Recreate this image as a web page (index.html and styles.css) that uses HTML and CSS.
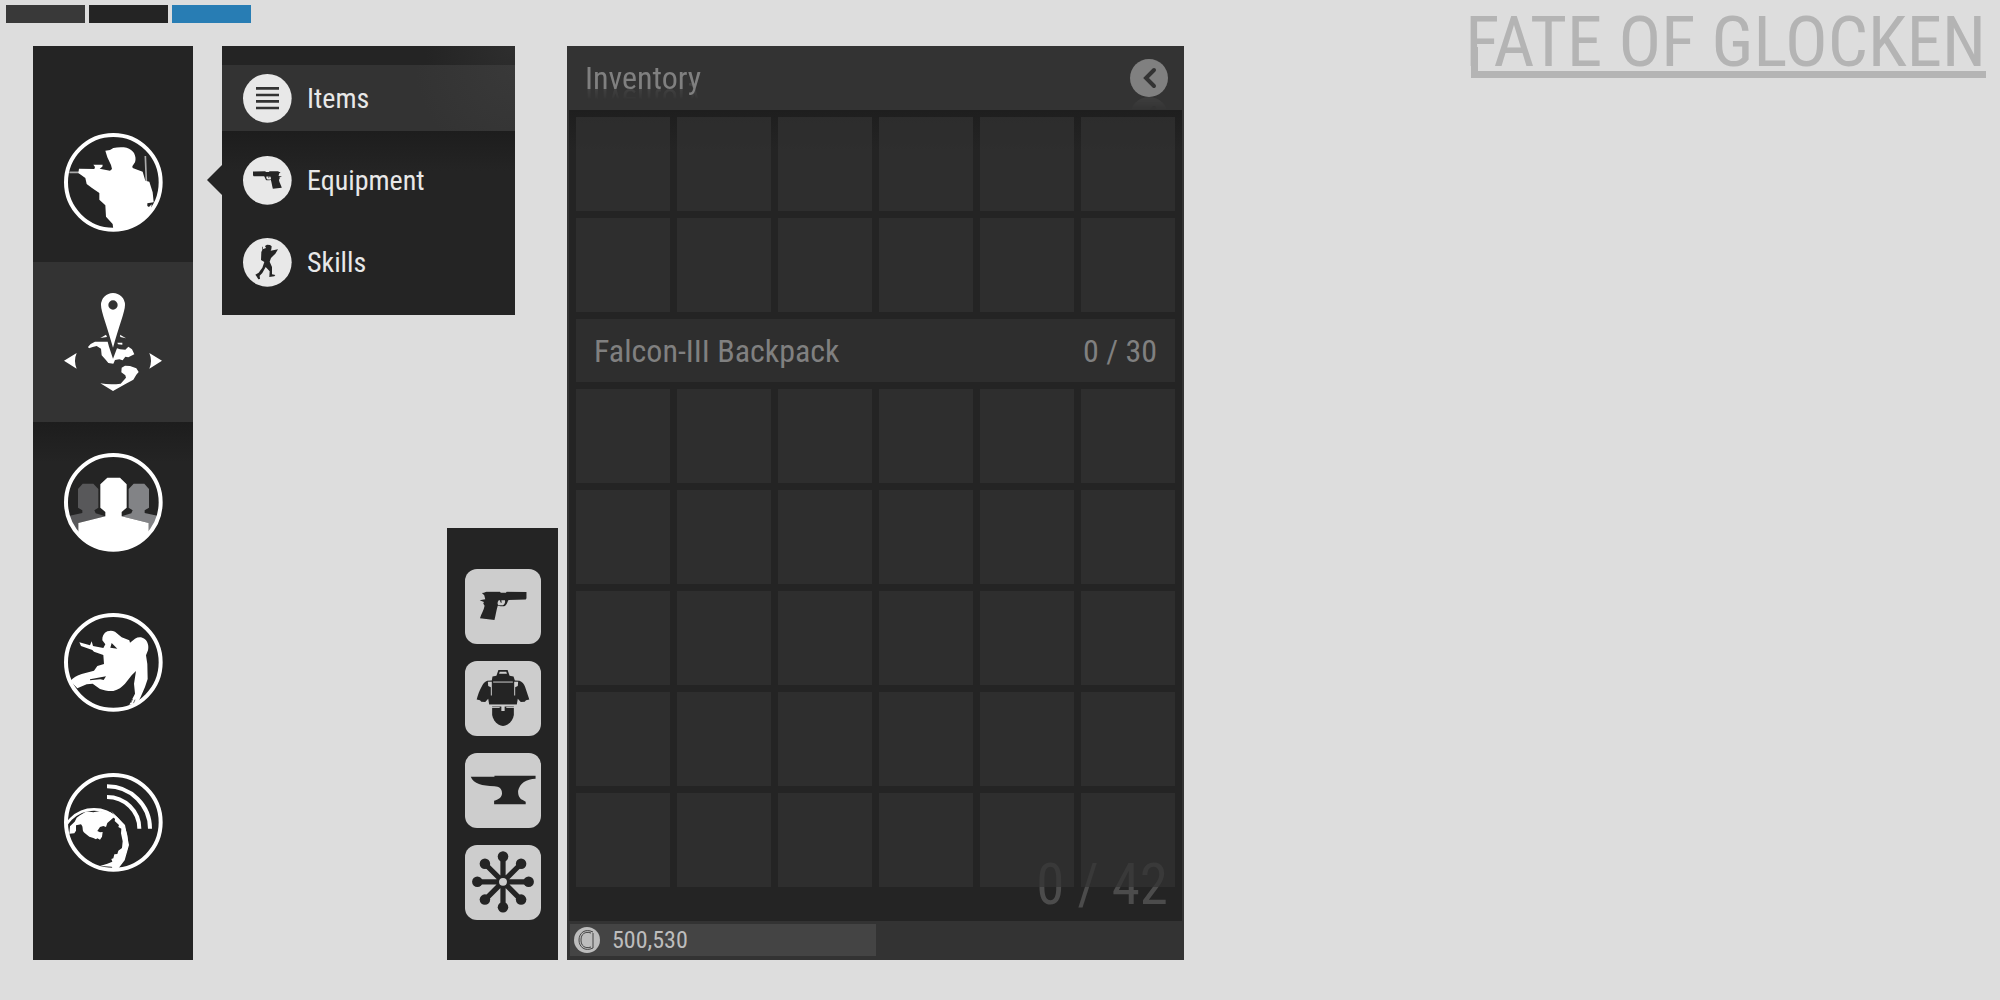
FILE: index.html
```html
<!DOCTYPE html>
<html lang="en">
<head>
  <meta charset="UTF-8">
  <meta name="viewport" content="width=device-width,initial-scale=1.0">
  <title>Fate of Glocken</title>
  <link rel="stylesheet" href="styles.css">
</head>
<body>

<!-- shared shapes -->
<svg class="defs" aria-hidden="true">
  <symbol id="pistol" viewBox="0 0 143 88">
    <path fill-rule="evenodd" d="M7 5l6-1 7-3h42l2 3h16l2-3 61 1v19l-3 4-52 1c-3 4-4 9-7 14-3 6-9 6-17 5l-9-1c-4 12-6 29-10 43L1 82c4-13 12-25 14-38l-4-7 2-5-13-5 17-3-3-12zM58 27c-4 5-5 12-1 15h14c6-3 7-9 6-15H66l1 8-4-2-1-6z"/>
  </symbol>
  <clipPath id="disc"><circle cx="148" cy="148" r="143"/></clipPath>
</svg>

<main class="left">
  <div class="swatches">
    <span class="swatch swatch-grey"></span>
    <span class="swatch swatch-dark"></span>
    <span class="swatch swatch-blue"></span>
  </div>

  <div class="hud">
    <nav class="sidebar" aria-label="Main">
      <button class="nav-btn" aria-label="Character">
        <svg class="nav-icon" viewBox="0 0 297 297">
          <circle class="ring" cx="148" cy="148" r="142"/>
          <path class="thin" d="M16 118h32M244 69l3 76"/>
          <path d="M45 107l46 1 2-6-5-7h28l-1 6-8 6 31 6 6-5-3-12-11-23-6-20 14-2 10-6c12-3 28-3 40-1 10 3 18 9 22 16 5 10 6 18 3 28l-8 12 1 5 30 11 8 27 12 3 10 32 3 30-19 3v8l5 3 8-8-2 18-25 30-40 21-48 7-2-17-20-22-2-34-18-17v-20l-22-15-16-12-4-18-21-15z"/>
        </svg>
      </button>
      <button class="nav-btn active" aria-label="Map">
        <svg class="nav-icon" viewBox="0 0 297 297">
          <path fill-rule="evenodd" d="M111 36a36 36 0 0 1 72 0c0 20-19 66-36 128-17-62-36-108-36-128zm50 0a14 14 0 1 0-28 0 14 14 0 0 0 28 0z"/>
          <path d="M109 135l17-10 3 7zM168 125l18 11-17-4zM160 149h15v6l-13-1z"/>
          <path d="M72 162l8-9 13-7h38l4 15 12 36 12-31 9 3 16 1 9-9 11 8 7 15-18 9-9-2-8 11-10-3-13 2-5 11-15-2-8-10-12-13-2-20-13-8-12 3-11 4z"/>
          <path d="M0 203l38-23q-10 23 0 47zM294 203l-38-23q10 23 0 47z"/>
          <path d="M173 224l10-6 15 1 19 7 7 11-7 8-9 15-25 14-36 20-38-23q30 5 61 1l16-18-2-7-12-9z"/>
        </svg>
      </button>
      <button class="nav-btn" aria-label="Squad">
        <svg class="nav-icon" viewBox="0 0 297 297">
          <g clip-path="url(#disc)">
            <path fill="#58585a" d="M56 92h32l15 16v56l-12 8 4 9 29 9-81 20v40H10v-60l45-10v-8l-13-8v-56z"/>
            <path fill="#828386" d="M241 92h-32l-15 16v56l12 8-4 9-29 9 81 20v40h33v-60l-45-10v-8l13-8v-56z"/>
            <path d="M130 74h38l20 20v70l-15 13v13l81 20v87H43v-87l81-20v-13l-15-13V94z"/>
          </g>
          <circle class="ring" cx="148" cy="148" r="142"/>
        </svg>
      </button>
      <button class="nav-btn" aria-label="Missions">
        <svg class="nav-icon" viewBox="0 0 297 297">
          <g clip-path="url(#disc)">
            <path fill-rule="evenodd" d="M46 88l32 9 5-12 4 14 31 6 6-11-9-12c-1-12 4-22 15-27 9-3 16-2 23 1l20 17 23 9 2 7 15-12c10-6 20-6 29 1 10 8 13 22 10 34l-6 15 4 26 1 45-8 24-13 30-10 20-24 3 17-33-3-30 6-38-13 13-20 25c-9 10-20 18-35 22-15 1-28-2-40-6l-22-16-18 2-28 12-17-18-5-3c10-12 21-18 35-22l37-10 10-14 20-6-2-27-28-10-5-5-34-12zM143 90l-4 14 21 3zM78 199l48-9-7 11-10-2-31 3z"/>
          </g>
          <path class="scratch" d="M200 270l6-12M208 272l5-12"/>
          <circle class="ring" cx="148" cy="148" r="142"/>
        </svg>
      </button>
      <button class="nav-btn" aria-label="Network">
        <svg class="nav-icon" viewBox="0 0 297 297">
          <g clip-path="url(#disc)">
            <circle class="globe" cx="90" cy="207" r="98"/>
            <path d="M48 127l20-12 20 3 20-4 30 3 15 13-23 20-4 12-8-3-10 3-8 12 8 4 8-1-2 14-6 9-8-4-4 3-8-4-12-4-14-11c-10-7-2-17-11-26l-15 3v16l-5 8-15 1 2-22 14-14 6-12z"/>
            <path d="M140 112l15 18-3 14 13 12-2 6 9 5-1 14 5 24-2 20-11 8-3 10-9 1-3 12-6 2 3 8-15 6-22 7 35 2 12 16 27-35 13-46-12-60z"/>
          </g>
          <path class="wave" d="M129 40a129 127 0 0 1 129 127M129 72a97 95 0 0 1 97 95"/>
          <circle class="ring" cx="148" cy="148" r="142"/>
        </svg>
      </button>
    </nav>

    <div class="middle">
      <nav class="submenu" aria-label="Character">
        <a class="sub-item active" href="#items">
          <svg class="sub-icon" viewBox="0 0 147 147">
            <circle cx="73" cy="73" r="73"/>
            <path class="lines" d="M39 43h69M39 63h69M39 82h69M39 102h69"/>
          </svg>
          Items
        </a>
        <a class="sub-item" href="#equipment">
          <svg class="sub-icon" viewBox="0 0 147 147">
            <circle cx="73" cy="73" r="73"/>
            <g transform="translate(117 45) scale(-1 1)"><use class="glyph" href="#pistol" width="87" height="54"/></g>
          </svg>
          Equipment
        </a>
        <a class="sub-item" href="#skills">
          <svg class="sub-icon" viewBox="0 0 147 147">
            <circle cx="73" cy="73" r="73"/>
            <path class="glyph" d="M66 24l6-4 9 1 5 4-1 9-2 4 22-4-8 13-13 13-4 11 7 16 0 22 10 2-3 4-15 2 1-17-12-13-10 18-8 8 1 10-5 1-6-10-3-4 10-6 11-15 6-17-10-6 1-24 4-8 10-4zM58 26h2v14h-2z"/>
          </svg>
          Skills
        </a>
      </nav>

      <div class="actions">
        <button class="action" aria-label="Weapons">
          <svg viewBox="0 0 228 228"><use href="#pistol" x="43" y="68" width="143" height="88"/></svg>
        </button>
        <button class="action" aria-label="Armor">
          <svg viewBox="0 0 228 228">
            <path d="M100 27h28l6 18 12 2 4 12 14 1c8 3 14 10 17 18l13 39-10 2-4 5-12 1-9-10-3 17H72l-3-17-9 10-12-1-4-5-10-2c4-15 8-27 15-39 4-8 9-15 17-18l14-1 2-12 12-2z"/>
            <path d="M81 138h66v26c-2 12-9 22-19 29-9 6-19 6-28 0-10-7-17-17-19-29z"/>
            <path class="cut" d="M104 33h20l2 6h-24zM68 63h12v42h-3V80l-8-4zM160 63h-12v42h3V80l8-4z"/>
            <path class="cut-line" d="M84 64h60M70 135h88M70 141h34M124 141h34"/>
            <path class="cut" d="M109 134h10v18h-10z"/>
          </svg>
        </button>
        <button class="action" aria-label="Crafting">
          <svg viewBox="0 0 228 228"><path d="M16 72h72v-3h125v9c-28 1-48 13-53 37-1 14 5 25 14 28l9 5v8H87v-11c15-4 24-12 24-23 0-14-9-20-23-21-38-2-63-7-72-29z"/></svg>
        </button>
        <button class="action" aria-label="Network hub">
          <svg viewBox="0 0 228 228">
            <path class="spokes" d="M114 35v154M36 112h156M59 57l110 110M169 57L59 167"/>
            <circle cx="114" cy="35" r="16"/><circle cx="114" cy="189" r="16"/>
            <circle cx="36" cy="112" r="16"/><circle cx="192" cy="112" r="16"/>
            <circle cx="59" cy="57" r="16"/><circle cx="169" cy="57" r="16"/>
            <circle cx="59" cy="166" r="16"/><circle cx="169" cy="166" r="16"/>
            <circle cx="114" cy="112" r="19"/>
            <circle class="cut" cx="114" cy="112" r="12"/>
          </svg>
        </button>
      </div>
    </div>

    <section class="inventory">
      <header class="inv-head">
        <h2>Inventory</h2>
        <button class="back" aria-label="Back">
          <svg viewBox="0 0 38 38"><circle cx="19" cy="19" r="19"/><path d="M24 11l-8 8 8 8"/></svg>
        </button>
      </header>

      <div class="inv-body">
        <ul class="slots">
          <li></li><li></li><li></li><li></li><li></li><li></li>
          <li></li><li></li><li></li><li></li><li></li><li></li>
        </ul>
        <div class="bag">
          <h3>Falcon-III Backpack</h3>
          <span>0 / 30</span>
        </div>
        <ul class="slots">
          <li></li><li></li><li></li><li></li><li></li><li></li>
          <li></li><li></li><li></li><li></li><li></li><li></li>
          <li></li><li></li><li></li><li></li><li></li><li></li>
          <li></li><li></li><li></li><li></li><li></li><li></li>
          <li></li><li></li><li></li><li></li><li></li><li></li>
        </ul>
        <span class="total">0 / 42</span>
      </div>

      <footer class="inv-foot">
        <div class="money">
          <svg viewBox="0 0 26 26"><circle cx="13" cy="13" r="13"/><path d="M19 5C11 1 5 6 5 13s6 12 14 8M17 6C11 4 7 7 7 13s4 9 10 7M19 6v15"/></svg>
          500,530
        </div>
      </footer>
    </section>
  </div>
</main>

<h1 class="logo">FATE OF GLOCKEN</h1>

</body>
</html>
```
FILE: styles.css
```css
:root {
  --bg: #dddddd;
  --panel: #242424;
  --panel-light: #333333;
  --button: #cdcdcd;
  --muted: #808080;
}

* {
  box-sizing: border-box;
}

body {
  margin: 0;
  display: flex;
  align-items: flex-start;
  justify-content: space-between;
  min-height: 100vh;
  background: var(--bg);
  font-family: "Roboto Condensed", Roboto, "Open Sans", sans-serif;
}

button {
  padding: 0;
  border: none;
  background: none;
  cursor: pointer;
}

h1, h2, h3, ul {
  margin: 0;
  padding: 0;
  font-weight: normal;
}

svg {
  display: block;
}

.defs {
  position: absolute;
  width: 0;
  height: 0;
}

.left {
  padding: 5px 0 0 6px;
}

/* colour swatches */
.swatches {
  display: flex;
  gap: 4px;
}

.swatch {
  width: 79px;
  height: 18px;
}

.swatch-grey { background: #393939; }
.swatch-dark { background: #242424; }
.swatch-blue { background: #287db4; }

.hud {
  display: flex;
  margin: 23px 0 0 27px;
}

/* main navigation */
.sidebar {
  width: 160px;
  padding: 56px 0 58px;
  background: var(--panel);
}

.nav-btn {
  display: flex;
  align-items: center;
  justify-content: center;
  width: 100%;
  height: 160px;
}

.nav-btn.active {
  background: var(--panel-light);
}

.nav-btn.active + .nav-btn,
.sub-item.active + .sub-item {
  background: linear-gradient(#1d1d1d, #242424 40px);
}

.nav-icon {
  width: 99px;
  height: 99px;
  fill: #fff;
}

.ring,
.wave {
  fill: none;
  stroke: #fff;
  stroke-width: 12;
}

.globe {
  fill: none;
  stroke: #fff;
  stroke-width: 8;
}

.thin {
  stroke: #aaa;
  stroke-width: 5;
}

.scratch {
  stroke: var(--panel);
  stroke-width: 2;
}

.middle {
  display: flex;
  flex-direction: column;
  justify-content: space-between;
  width: 336px;
  margin: 0 9px 0 29px;
}

/* flyout */
.submenu {
  position: relative;
  width: 293px;
  padding: 19px 0 20px;
  background: radial-gradient(circle at 100% 0, #2e2e2e, #242424 90px);
}

.submenu::before {
  content: "";
  position: absolute;
  left: -15px;
  top: 119px;
  border: solid transparent;
  border-width: 15px 15px 15px 0;
  border-right-color: var(--panel);
}

.sub-item {
  display: flex;
  align-items: center;
  gap: 15px;
  height: 66px;
  padding-left: 21px;
  color: #e8e8e8;
  font-size: 28px;
  text-decoration: none;
}

.sub-item.active {
  background: radial-gradient(circle at 100% 0, #393939, #333333 100px);
}

.sub-item.active + .sub-item {
  height: 98px;
}

.sub-icon {
  width: 49px;
  height: 49px;
  fill: #e8e8e8;
}

.glyph {
  fill: var(--panel);
}

.lines {
  stroke: #333;
  stroke-width: 8;
}

/* quick actions */
.actions {
  display: flex;
  flex-direction: column;
  align-items: center;
  gap: 17px;
  align-self: flex-end;
  width: 111px;
  padding: 41px 0 40px;
  background: var(--panel);
}

.action {
  width: 76px;
  height: 75px;
  border-radius: 12px;
  background: var(--button);
  fill: var(--panel);
}

.action svg {
  width: 100%;
  height: 100%;
}

.cut {
  fill: var(--button);
}

.cut-line {
  stroke: var(--button);
  stroke-width: 3;
}

.spokes {
  stroke: var(--panel);
  stroke-width: 16;
}

/* inventory */
.inventory {
  width: 617px;
  background: var(--panel-light);
  color: var(--muted);
}

.inv-head {
  display: flex;
  align-items: center;
  justify-content: space-between;
  height: 64px;
  padding: 0 16px 0 18px;
}

.inv-head h2 {
  font-size: 32px;
  line-height: 36px;
  -webkit-box-reflect: below -14px linear-gradient(transparent 50%, rgba(0, 0, 0, 0.3));
}

.back {
  width: 38px;
  height: 38px;
  fill: var(--muted);
  -webkit-box-reflect: below 0 linear-gradient(transparent 65%, rgba(0, 0, 0, 0.15));
}

.back path {
  fill: none;
  stroke: var(--panel-light);
  stroke-width: 4;
  stroke-linecap: round;
}

.inv-body {
  position: relative;
  z-index: 0;
  display: flex;
  flex-direction: column;
  gap: 7px;
  margin: 0 2px;
  padding: 7px 7px 34px;
  background: linear-gradient(#1e1e1e, #242424 40px);
}

.slots {
  display: grid;
  grid-template-columns: repeat(6, 1fr);
  gap: 7px;
  list-style: none;
}

.slots li {
  aspect-ratio: 1;
  background: rgba(50, 50, 50, 0.72);
}

.bag {
  display: flex;
  align-items: center;
  justify-content: space-between;
  height: 63px;
  padding: 0 18px;
  background: #2e2e2e;
  font-size: 32px;
}

.bag h3 {
  font-size: inherit;
}

/* sits under the translucent slots */
.total {
  position: absolute;
  right: 14px;
  bottom: 2px;
  z-index: -1;
  color: #4c4c4c;
  font-size: 57px;
  line-height: 68px;
}

.inv-foot {
  padding: 3px 3px 4px;
}

.money {
  display: flex;
  align-items: center;
  gap: 12px;
  width: 50%;
  height: 32px;
  padding-left: 4px;
  background: #444;
  color: #bdbdbd;
  font-size: 24px;
}

.money svg {
  width: 26px;
  height: 26px;
  fill: #bdbdbd;
}

.money path {
  fill: none;
  stroke: #444;
}

/* game logo */
.logo {
  position: relative;
  margin: 5px 14px 0 0;
  padding-top: 8px;
  border-bottom: 7px solid #b4b4b4;
  color: #b4b4b4;
  font-size: 71px;
  line-height: 58px;
  text-indent: -6px;
  white-space: nowrap;
}

/* stem of the F runs down into the rule */
.logo::before {
  content: "";
  position: absolute;
  left: 0;
  bottom: 0;
  width: 7px;
  height: 24px;
  background: #b4b4b4;
}
```
